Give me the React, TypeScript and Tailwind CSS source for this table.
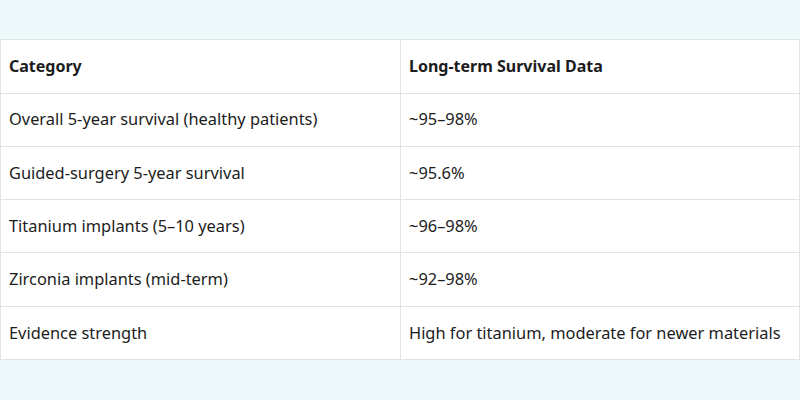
export default function App() {
  const rows: [string, string][] = [
    ["Overall 5-year survival (healthy patients)", "~95–98%"],
    ["Guided-surgery 5-year survival", "~95.6%"],
    ["Titanium implants (5–10 years)", "~96–98%"],
    ["Zirconia implants (mid-term)", "~92–98%"],
    ["Evidence strength", "High for titanium, moderate for newer materials"],
  ];

  return (
    <div className="w-[800px] h-[400px] bg-[#edf8fb] pt-[39px] font-['Noto_Sans',sans-serif] text-[#1c1c1c]">
      <table className="w-[800px] border-collapse bg-white table-fixed">
        <tbody>
          <tr className="h-[53.5px] text-[16px]">
            <th className="w-[400px] border border-[#e2e4e4] px-2 text-left font-bold">Category</th>
            <th className="border border-[#e2e4e4] px-2 text-left font-bold">Long-term Survival Data</th>
          </tr>
          {rows.map(([a, b]) => (
            <tr key={a} className="h-[53.3px] text-[16.4px]">
              <td className="border border-[#e2e4e4] px-2">{a}</td>
              <td className="border border-[#e2e4e4] px-2">{b}</td>
            </tr>
          ))}
        </tbody>
      </table>
    </div>
  );
}
